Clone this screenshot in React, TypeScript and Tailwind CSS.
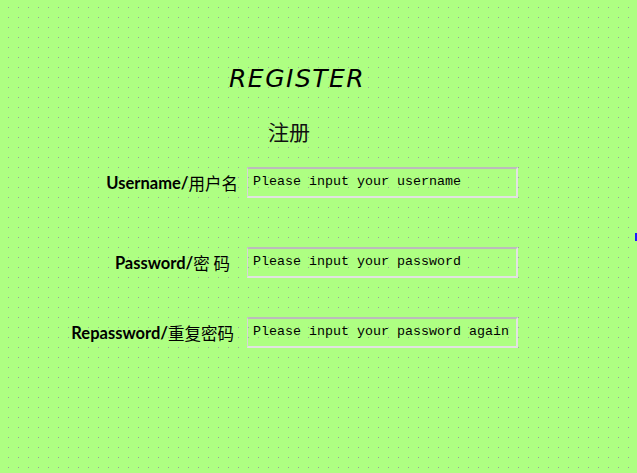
const FIELDS = [
  { en: "Username", zh: "用户名", placeholder: "Please input your username", pr: "pr-0", mt: "mt-[23px]" },
  { en: "Password", zh: "密 码", placeholder: "Please input your password", pr: "pr-[8px]", mt: "mt-[49px]" },
  { en: "Repassword", zh: "重复密码", placeholder: "Please input your password again", pr: "pr-[4px]", mt: "mt-[39px]" },
] as const;

export default function App() {
  return (
    <div className="relative h-[473px] w-full overflow-hidden bg-[#aeff82] bg-[radial-gradient(circle_at_0.5px_0.5px,#9a9aa4_0.6px,transparent_0.9px)] bg-[length:10px_10px] bg-[position:8px_7px]">
      {/* Title */}
      <div className="flex flex-col">
        <h1
          className="ml-[229px] mt-[64px] text-[25px] leading-[30px] italic tracking-[1.5px] text-black"
          style={{ fontFamily: "'Comic Sans MS', 'DejaVu Sans', sans-serif" }}
        >
          REGISTER
        </h1>
        <p className="ml-[268px] mt-[24px] text-[21px] leading-[26px] text-[#111] [font-family:'Noto_Sans_CJK_SC',sans-serif]">
          注册
        </p>
      </div>

      {/* Form */}
      <form className="flex flex-col">
        {FIELDS.map((f) => (
          <div key={f.en} className={`flex h-[31px] ${f.mt}`}>
            <label className={`flex h-[31px] w-[238px] items-center justify-end text-[16.5px] leading-[20px] text-black ${f.pr}`}>
              <span className="font-bold [font-family:Lato,'Open_Sans',sans-serif]">{f.en}/</span>
              <span className="[font-family:'Noto_Sans_CJK_SC',sans-serif]">{f.zh}</span>
            </label>
            <input
              type="text"
              placeholder={f.placeholder}
              className="ml-[9px] h-[31px] w-[271px] border-solid border-t-2 border-l border-r-2 border-b-2 border-t-[#bcbcbc] border-l-[#d6d6d6] border-r-[#e2e2e2] border-b-[#e2e2e2] bg-transparent px-[5px] pb-[3px] text-[13.33px] text-black outline-none placeholder:text-black [font-family:'Liberation_Mono',monospace]"
            />
          </div>
        ))}
      </form>

      {/* Edge marker */}
      <div className="absolute right-0 top-[233px] h-[8px] w-[2px] bg-[#1a1aff]" />
    </div>
  );
}
